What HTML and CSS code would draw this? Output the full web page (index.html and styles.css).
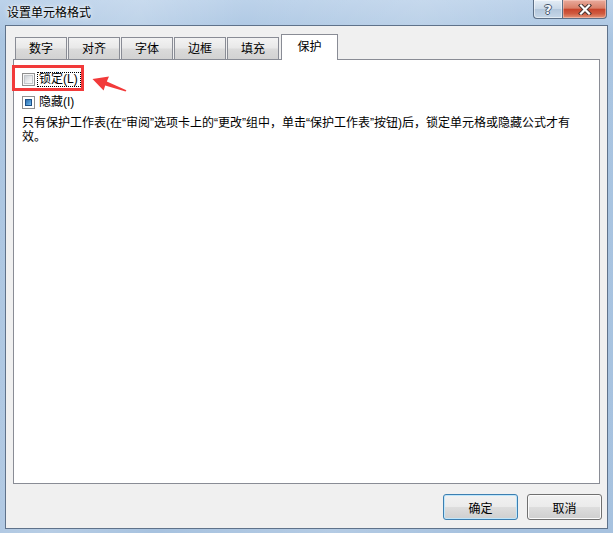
FILE: index.html
```html
<!DOCTYPE html>
<html lang="zh-CN">
<head>
<meta charset="utf-8">
<title>设置单元格格式</title>
<link rel="stylesheet" href="styles.css">
</head>
<body>
<div class="window">
  <div class="titlebar">
    <span class="title">设置单元格格式</span>
    <div class="caption-buttons">
      <span class="cap-btn help">?</span>
      <span class="cap-btn close">
        <svg width="14" height="11" viewBox="0 0 14 11">
          <path d="M3 1.5 L11 9.5 M11 1.5 L3 9.5" stroke="#4a3531" stroke-width="4.2" stroke-linecap="square" fill="none"/>
          <path d="M3 1.5 L11 9.5 M11 1.5 L3 9.5" stroke="#ffffff" stroke-width="2.2" stroke-linecap="square" fill="none"/>
        </svg>
      </span>
    </div>
  </div>
  <div class="client">
    <div class="tabs">
      <div class="tab">数字</div>
      <div class="tab">对齐</div>
      <div class="tab">字体</div>
      <div class="tab">边框</div>
      <div class="tab">填充</div>
      <div class="tab active">保护</div>
    </div>
    <div class="panel">
      <div class="check-row">
        <span class="checkbox"><span class="inner"></span></span>
        <span class="label focus">锁定(L)</span>
      </div>
      <div class="check-row second">
        <span class="checkbox mixed"><span class="inner"></span></span>
        <span class="label">隐藏(I)</span>
      </div>
      <p class="note">只有保护工作表(在“审阅”选项卡上的“更改”组中，单击“保护工作表”按钮)后，锁定单元格或隐藏公式才有效。</p>
    </div>
    <div class="buttons">
      <button class="btn default">确定</button>
      <button class="btn">取消</button>
    </div>
  </div>
  <svg class="annotation" width="613" height="533" viewBox="0 0 613 533">
    <rect x="13.5" y="66.5" width="69" height="23" fill="none" stroke="#f23a3a" stroke-width="3"/>
    <polygon points="92.5,79 109,76.5 106.8,81.6 126.4,90.2 125.6,91.6 105.2,85.6 103.6,90.6" fill="#f23a3a"/>
  </svg>
</div>
</body>
</html>
```

FILE: styles.css
```css
html, body {
  margin: 0;
  padding: 0;
}

body {
  width: 613px;
  height: 533px;
  overflow: hidden;
  font-family: "Liberation Sans", "Noto Sans CJK SC", sans-serif;
  font-size: 12px;
  color: #000;
}

.window {
  position: relative;
  width: 613px;
  height: 533px;
  display: flex;
  flex-direction: column;
  background:
    linear-gradient(100deg, rgba(255,255,255,0) 0%, rgba(255,255,255,0.18) 20%, rgba(255,255,255,0) 35%, rgba(255,255,255,0.15) 60%, rgba(255,255,255,0) 80%),
    linear-gradient(#bcd2ea, #aac5e1 40px, #a7c2df);
}

.titlebar {
  height: 25px;
  display: flex;
  flex: none;
}

.title {
  padding: 6px 0 0 7px;
  line-height: 14px;
  font-size: 12px;
  text-shadow: 0 0 6px rgba(255,255,255,0.95), 0 0 3px rgba(255,255,255,0.9);
}

.caption-buttons {
  margin-left: auto;
  margin-right: 6px;
  display: flex;
  align-self: flex-start;
}

.cap-btn {
  height: 19px;
  box-sizing: border-box;
  border: 1px solid #5c6f86;
  border-top: none;
  display: flex;
  align-items: center;
  justify-content: center;
}

.help {
  width: 29px;
  border-right: none;
  border-radius: 0 0 0 4px;
  background: linear-gradient(#e4edf6, #cad9e8 48%, #b3c7dc 52%, #c6d7e8);
  color: #f6f8fb;
  font-family: "DejaVu Sans", sans-serif;
  font-weight: bold;
  font-size: 13px;
  text-shadow: -1px 0 #44566c, 1px 0 #44566c, 0 -1px #44566c, 0 1px #44566c;
  box-shadow: inset 0 0 0 1px rgba(255,255,255,0.5);
}

.close {
  width: 45px;
  border-radius: 0 0 4px 0;
  background: linear-gradient(#e9ab9c, #d98069 45%, #c8452c 52%, #cf5a3f 75%, #e39478);
  box-shadow: inset 0 0 0 1px rgba(255,220,210,0.45);
}

.client {
  flex: 1;
  margin: 0 5px 4px 5px;
  border: 1px solid #5f728a;
  background: #f0f0f0;
  display: flex;
  flex-direction: column;
}

.tabs {
  display: flex;
  align-items: flex-end;
  height: 25px;
  margin: 8px 7px 0;
  padding-left: 2px;
}

.tab {
  width: 52px;
  height: 22px;
  margin-right: 1px;
  box-sizing: border-box;
  border: 1px solid #898c95;
  border-bottom: none;
  background: linear-gradient(#f3f3f3, #e9e9e9 45%, #dadada 55%, #d2d2d2);
  display: flex;
  align-items: center;
  justify-content: center;
  line-height: 14px;
}

.tab.active {
  width: 57px;
  height: 26px;
  margin-left: 1px;
  margin-bottom: -1px;
  padding-bottom: 2px;
  background: #fff;
  position: relative;
  z-index: 1;
}

.panel {
  margin: 0 7px;
  height: 425px;
  box-sizing: border-box;
  border: 1px solid #898c95;
  background: #fff;
  padding: 12px 8px 0;
}

.check-row {
  display: flex;
  align-items: center;
  height: 15px;
}

.check-row.second {
  margin-top: 8px;
}

.checkbox {
  width: 13px;
  height: 13px;
  box-sizing: border-box;
  border: 1px solid #8f8f8f;
  background: #f6f6f6;
  padding: 1px;
  flex: none;
}

.checkbox .inner {
  display: block;
  width: 9px;
  height: 9px;
  box-sizing: border-box;
  border: 1px solid #c4c7cb;
  background: linear-gradient(135deg, #cdd1d6, #e9eaec 55%, #fbfbfb);
}

.checkbox.mixed {
  background: #fff;
  padding: 2px;
}

.checkbox.mixed .inner {
  width: 7px;
  height: 7px;
  border: 1px solid #1c4f86;
  background: linear-gradient(135deg, #2f6fae, #4c95d0 55%, #7cc0ec);
}

.label {
  margin-left: 2px;
  padding: 0 2px 0 1px;
  border: 1px dotted transparent;
  line-height: 13px;
  white-space: nowrap;
}

.label.focus {
  border-color: #000;
}

.note {
  margin: 6px 0 0;
  width: 555px;
  line-height: 14px;
}

.buttons {
  display: flex;
  justify-content: flex-end;
  gap: 9px;
  margin-top: 10px;
  padding-right: 5px;
}

.btn {
  width: 75px;
  height: 26px;
  padding: 0;
  border: 1px solid #707070;
  border-radius: 3px;
  background: linear-gradient(#f2f2f2, #ebebeb 48%, #dddddd 52%, #cfcfcf);
  box-shadow: inset 0 0 0 1px #fbfbfb;
  font-family: "Liberation Sans", "Noto Sans CJK SC", sans-serif;
  font-size: 12px;
  color: #000;
}

.btn.default {
  border-color: #3c7fb1;
  box-shadow: inset 0 0 0 1px #bfe6fb;
}

.annotation {
  position: absolute;
  left: 0;
  top: 0;
  pointer-events: none;
}
```
